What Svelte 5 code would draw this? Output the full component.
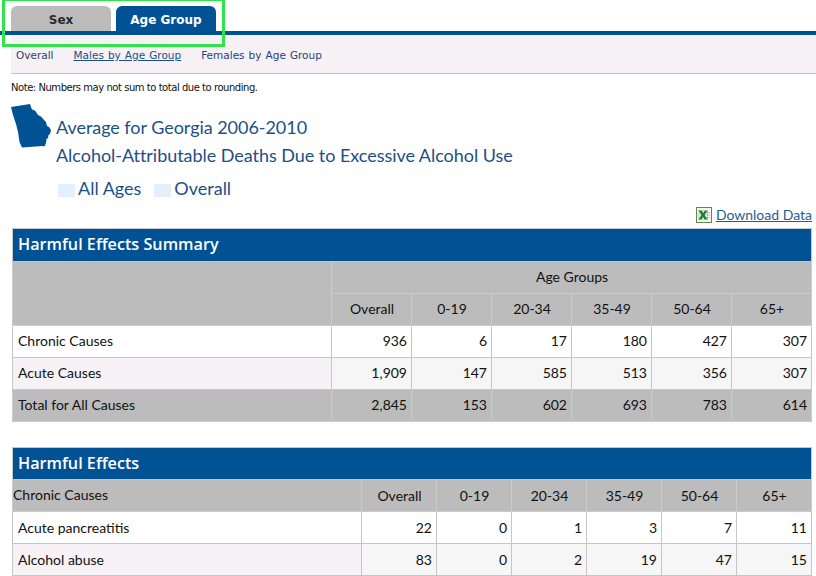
<script>
  const t1 = [
    { name: 'Chronic Causes', vals: ['936','6','17','180','427','307'], alt: false },
    { name: 'Acute Causes', vals: ['1,909','147','585','513','356','307'], alt: true }
  ];
  const t2 = [
    { name: 'Acute pancreatitis', vals: ['22','0','1','3','7','11'], alt: false },
    { name: 'Alcohol abuse', vals: ['83','0','2','19','47','15'], alt: true }
  ];
  const cols = ['Overall','0-19','20-34','35-49','50-64','65+'];
</script>

<div class="page">
  <div class="highlight"></div>
  <nav class="tabs">
    <div class="tab">Sex</div>
    <div class="tab active">Age Group</div>
  </nav>
  <div class="subnav">
    <span>Overall</span>
    <span class="cur">Males by Age Group</span>
    <span>Females by Age Group</span>
  </div>
  <p class="note">Note: Numbers may not sum to total due to rounding.</p>

  <header class="heading">
    <svg class="ga" width="42" height="46" viewBox="0 0 42 46">
      <path d="M0 3 L19 0 L20.5 4.5 L22 6 L24 6.5 L27 11 L30 12.5 L33 16 L35 18 L36 22 L38 23 L40 26 L39 30 L37.5 31 L37 34 L35.5 35 L35 39 L33.5 42.5 L32 42 L11 43.5 L8.5 38 L7 28 L5 20 L2 11 Z" fill="#005295"/>
    </svg>
    <div class="titles">
      <div>Average for Georgia 2006-2010</div>
      <div>Alcohol-Attributable Deaths Due to Excessive Alcohol Use</div>
    </div>
  </header>

  <div class="filters">
    <span class="chip"></span><span class="flabel">All Ages</span>
    <span class="chip second"></span><span class="flabel">Overall</span>
  </div>

  <div class="download">
    <svg width="16" height="16" viewBox="0 0 16 16">
      <rect x="0.5" y="0.5" width="15" height="15" fill="#f2f8ee" stroke="#5d8a50"/>
      <rect x="2" y="3" width="12" height="10" fill="#cfe3c6"/>
      <path d="M9 3h5v10H9z" fill="#fff"/>
      <path d="M9 5.5h5M9 8h5M9 10.5h5M11.5 3v10" stroke="#8fb583" stroke-width="0.7" fill="none"/>
      <path d="M2.5 3.5 L5.6 3.5 L7.2 6.2 L8.9 3.5 L11.5 3.5 L8.6 8 L11.5 12.5 L8.6 12.5 L7 9.8 L5.4 12.5 L2.5 12.5 L5.5 8 Z" fill="#1f7a3a"/>
    </svg>
    <span class="dl">Download Data</span>
  </div>

  <table class="t1">
    <colgroup><col class="c0" />{#each cols as c}<col class="cn" />{/each}</colgroup>
    <thead>
      <tr><th colspan="7" class="title">Harmful Effects Summary</th></tr>
      <tr class="gray"><th rowspan="2"></th><th colspan="6">Age Groups</th></tr>
      <tr class="gray">{#each cols as c}<th>{c}</th>{/each}</tr>
    </thead>
    <tbody>
      {#each t1 as r}
        <tr class:alt={r.alt}><td class="name">{r.name}</td>{#each r.vals as v}<td>{v}</td>{/each}</tr>
      {/each}
      <tr class="total"><td class="name">Total for All Causes</td>{#each ['2,845','153','602','693','783','614'] as v}<td>{v}</td>{/each}</tr>
    </tbody>
  </table>

  <table class="t2">
    <colgroup><col class="c0" />{#each cols as c}<col class="cn" />{/each}</colgroup>
    <thead>
      <tr><th colspan="7" class="title">Harmful Effects</th></tr>
      <tr class="gray"><th class="cc"><span>Chronic Causes</span></th>{#each cols as c}<th>{c}</th>{/each}</tr>
    </thead>
    <tbody>
      {#each t2 as r}
        <tr class:alt={r.alt}><td class="name">{r.name}</td>{#each r.vals as v}<td>{v}</td>{/each}</tr>
      {/each}
    </tbody>
  </table>
</div>

<style>
  :global(body) { margin: 0; background: #fff; }
  .page { position: relative; width: 816px; height: 576px; overflow: hidden; font-family: Lato, sans-serif; color: #111; }
  .highlight { position: absolute; left: 2px; top: -2px; width: 217px; height: 43px; border: 3px solid #2fe34a; pointer-events: none; z-index: 2; }
  .tabs { display: flex; gap: 5px; padding: 6px 0 0 11px; height: 25px; border-bottom: 4px solid #005295; }
  .tab { width: 100px; height: 25px; box-sizing: border-box; background: #bcbcbc; border-radius: 6px 6px 0 0; text-align: center; font: bold 12px/28px "DejaVu Sans", sans-serif; color: #2a2a2a; }
  .tab.active { background: #005295; color: #fff; }
  .subnav { margin-left: 11px; height: 38px; background: #f5f1f5; border-bottom: 1px solid #c4c4c4; display: flex; box-sizing: content-box; padding-left: 5px; gap: 20px; font: 10.5px/40px "DejaVu Sans", sans-serif; word-spacing: 0.7px; color: #2b3f7a; }
  .subnav span:first-child { color: #33406b; }
  .cur { text-decoration: underline; color: #1d4f8c; line-height: 40px; }
  .note { margin: 7px 0 0 11px; font: 10px/13px "DejaVu Sans", sans-serif; letter-spacing: -0.46px; color: #111; }
  .heading { display: flex; margin: 12px 0 0 11px; height: 72px; }
  .ga { margin-top: -2px; flex: none; margin-right: 3px; }
  .titles { font-size: 18px; line-height: 28px; color: #1c4f86; padding-top: 7px; letter-spacing: -0.04px; }
  .filters { display: flex; align-items: center; height: 26px; margin: -3px 0 0 58px; font-size: 18px; color: #1c4f86; }
  .chip { width: 17px; height: 13px; background: #e3effb; margin-top: 4px; margin-right: 3px; }
  .chip.second { margin-left: 13px; }
  .download { display: flex; justify-content: flex-end; align-items: center; gap: 4px; height: 17px; margin: 5px 4px 0 0; font-size: 14px; color: #1c5f8f; }
  .dl { text-decoration: underline; }
  table { border-collapse: collapse; table-layout: fixed; width: 800px; margin-left: 12px; font-size: 14px; }
  .t1 { margin-top: 5px; }
  .t1 .c0 { width: 319px; }
  .t1 .cn { width: 80px; }
  .t2 { margin-top: 25px; }
  .t2 .c0 { width: 349px; }
  .t2 .cn { width: 75px; }
  th, td { border: 1px solid #c6c6c6; height: 31px; padding: 0 4px 0 5px; box-sizing: content-box; font-weight: 400; }
  .t1 th, .t1 td { height: 29px; padding-bottom: 2px; }
  th { text-align: center; }
  .title { background: #005295; color: #fff; text-align: left; font: 600 16.2px "Open Sans", sans-serif; padding-left: 5px; border-color: #c6c6c6; }
  .t1 .title { height: 30px; padding-bottom: 2px; }
  .t2 .title { height: 30px; padding-bottom: 1px; }
  .gray th { background: #bcbcbc; border-color: #cbcbcb; }
  td { text-align: right; }
  td.name { text-align: left; }
  tr.alt td { background: #f6f6f6; }
  tr.alt td.name { background: #f6f2f6; }
  .total td { background: #bcbcbc; border-color: #cbcbcb; }
  .t2 .gray th.cc { text-align: left; padding-left: 0; }
  .cc span { position: relative; top: -1px; }
</style>
